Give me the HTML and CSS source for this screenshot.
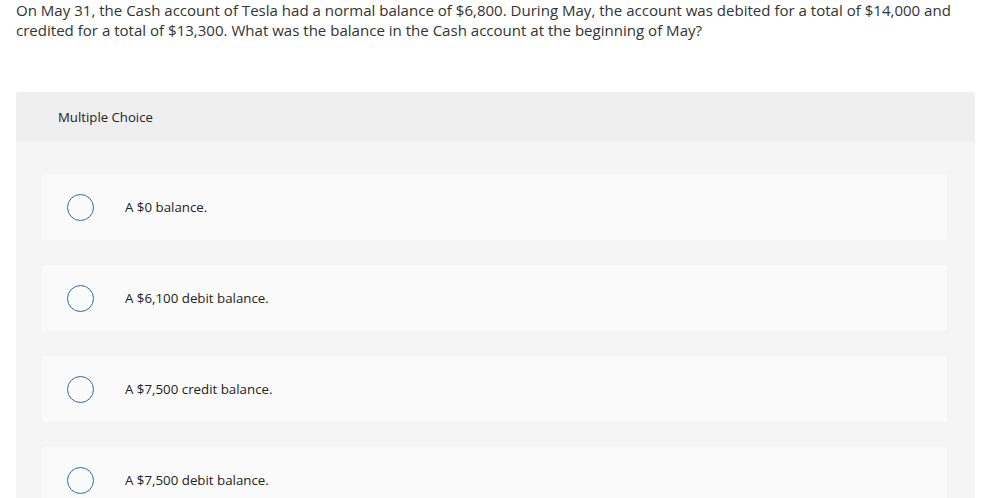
FILE: index.html
```html
<!DOCTYPE html>
<html>
<head>
<meta charset="utf-8">
<link rel="stylesheet" href="styles.css">
</head>
<body>
<div class="page">
  <p class="question">On May 31, the Cash account of Tesla had a normal balance of $6,800. During May, the account was debited for a total of $14,000 and credited for a total of $13,300. What was the balance in the Cash account at the beginning of May?</p>
  <div class="panel">
    <div class="panel-head">Multiple Choice</div>
    <div class="choices">
      <div class="choice"><span class="radio"></span><span class="label">A $0 balance.</span></div>
      <div class="choice"><span class="radio"></span><span class="label">A $6,100 debit balance.</span></div>
      <div class="choice"><span class="radio"></span><span class="label">A $7,500 credit balance.</span></div>
      <div class="choice"><span class="radio"></span><span class="label">A $7,500 debit balance.</span></div>
    </div>
  </div>
</div>
</body>
</html>
```
FILE: styles.css
```css
html, body { margin: 0; padding: 0; background: #fff; }
body { font-family: "Open Sans", "Liberation Sans", sans-serif; color: #333; }
.page { padding: 0 14px 0 16px; }
.question { margin: 0; font-size: 15.05px; line-height: 20px; width: 950px; }
.panel { margin-top: 52px; width: 959px; background: #f5f5f5; border-radius: 3px 3px 0 0; }
.panel-head { height: 50px; display: flex; align-items: center; padding-left: 42px; background: #efefef; font-size: 13.2px; color: #222; border-radius: 3px 3px 0 0; }
.choices { padding: 32px 28px 40px 26px; display: flex; flex-direction: column; gap: 25px; }
.choice { height: 66px; background: #fafafa; border-radius: 3px; display: flex; align-items: center; padding-left: 25px; }
.radio { width: 25px; height: 25px; border: 1.5px solid #2a6aa6; border-radius: 50%; box-sizing: content-box; flex: none; }
.label { margin-left: 31px; font-size: 13.3px; color: #222; }
```
